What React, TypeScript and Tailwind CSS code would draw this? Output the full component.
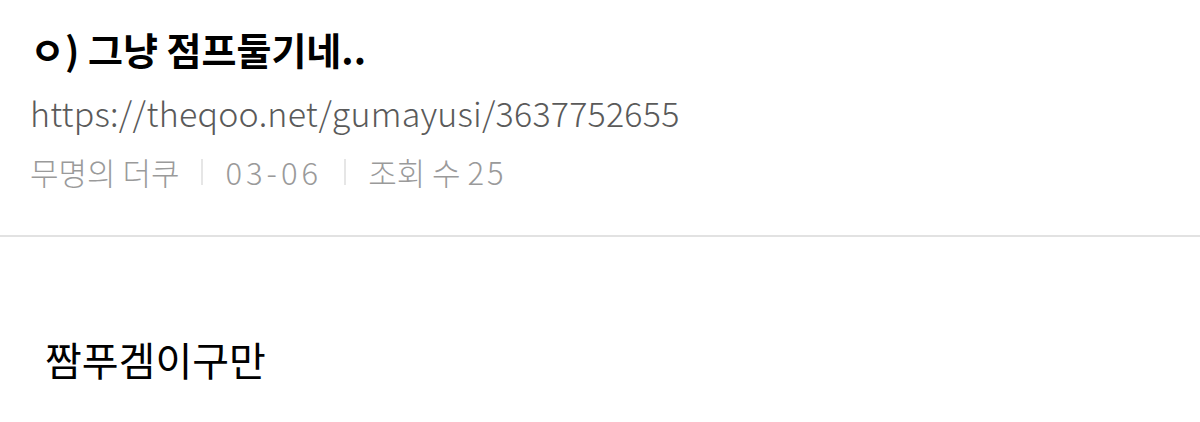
import React from 'react';

const font = { fontFamily: '"Noto Sans CJK KR", "Noto Sans", sans-serif' };

const Sep = () => <span className="mx-[22px] inline-block h-[26px] w-[2px] bg-[#e6e6e6]" />;

const App = () => {
  return (
    <div className="h-[422px] w-[1200px] bg-white" style={font}>
      <div className="px-[30px] pt-[22px] pb-[38px]">
        <h1 className="text-[38px] font-bold leading-[54px] text-black">ㅇ) 그냥 점프둘기네..</h1>
        <div className="mt-[12px] text-[34px] font-light leading-[50px] tracking-[0.2px] text-[#5a5a5a]">
          https://theqoo.net/gumayusi/3637752655
        </div>
        <div className="mt-[9px] flex items-center text-[31px] font-light leading-[50px] text-[#9a9a9a]">
          <span>무명의 더쿠</span>
          <Sep />
          <span className="tracking-[4px]">03-06</span>
          <Sep />
          <span>
            조회 수 <span className="tracking-[3px]">25</span>
          </span>
        </div>
      </div>
      <div className="h-[2px] bg-[#e2e2e2]" />
      <div className="px-[45px] pt-[94px]">
        <p className="text-[40px] leading-[56px] text-black">짬푸겜이구만</p>
      </div>
    </div>
  );
};

export default App;
